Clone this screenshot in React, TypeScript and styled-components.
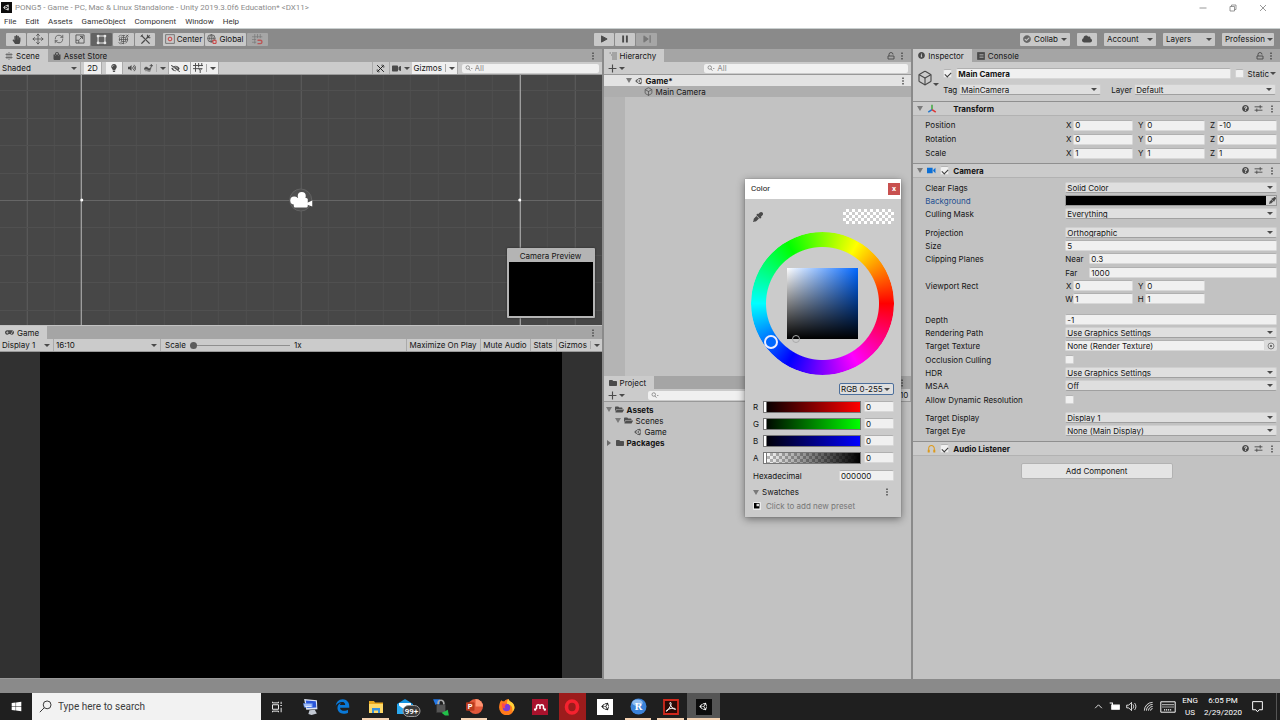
import React from "react";
import styled, { createGlobalStyle, css } from "styled-components";
import {
  FaUnity, FaHandPaper, FaCloud, FaEdgeLegacy, FaLightbulb, FaWindows, FaVolumeUp, FaEyeDropper,
  FaShoppingBag, FaCheckCircle, FaInfoCircle, FaQuestionCircle, FaGamepad, FaFolder, FaFolderOpen,
  FaEyeSlash, FaVideo,
} from "react-icons/fa";
import { Box, Move, RefreshCw } from "lucide-react";

const ui = `Inter, "Liberation Sans", sans-serif`;
const sys = `Roboto, "Noto Sans", sans-serif`;

const Global = createGlobalStyle`
  * { box-sizing: border-box; }
  body { margin: 0; background: #8a8a8a; font-family: ${ui}; font-size: 8px; line-height: 10px; color: #141414; }
  button, input, select { font: inherit; color: inherit; margin: 0; padding: 0; border: 0; background: none; border-radius: 0; min-width: 0; }
  h1, h2, h3, p, ul { margin: 0; padding: 0; font: inherit; }
  svg { display: block; flex: none; }
`;

/* ---------- shared parts ---------- */
const Page = styled.div`
  min-height: 100vh;
  display: flex;
  flex-direction: column;
`;
const Spacer = styled.div`flex: 1;`;
const Caret = styled.span`
  flex: none;
  border: 3px solid transparent;
  border-top-color: #4a4a4a;
  border-bottom: 0;
  width: 6px;
`;
const Foldout = styled.span`
  flex: none;
  border: 3px solid transparent;
  border-top: 5px solid #7a7a7a;
  border-bottom: 0;
  width: 6px;
`;
const CaretRight = styled.span`
  flex: none;
  margin-right: 2px;
  border: 3px solid transparent;
  border-left: 4px solid #6a6a6a;
  border-right: 0;
`;
const NoCaret = styled.span`width: 6px;`;
const Svg = ({ s = 10, w, children, vb = "0 0 16 16" }: { s?: number; w?: number; vb?: string; children: React.ReactNode }) => (
  <svg width={w ?? s} height={s} viewBox={vb} fill="none" stroke="currentColor" strokeWidth="1.5" aria-hidden="true">{children}</svg>
);
const Dots = () => (
  <Svg s={8}><g fill="currentColor" stroke="none"><rect x="6.5" y="1" width="3" height="3" /><rect x="6.5" y="6.5" width="3" height="3" /><rect x="6.5" y="12" width="3" height="3" /></g></Svg>
);
const Lock = () => (
  <Svg s={8}><path d="M2 8h12v6H2zM4 8V5a4 4 0 0 1 8 0" strokeWidth="1.8" /></Svg>
);
const Magnifier = () => (
  <Svg s={8}><circle cx="5.5" cy="7" r="3.5" /><path d="M8 10l3 3.500M12 8l1.500 1.500L15 8" /></Svg>
);
const Sliders = () => (
  <Svg s={9}><path d="M1 5h14M11 2v6M1 11h14M5 8v6" strokeWidth="1.600" /></Svg>
);

/* ---------- window chrome ---------- */
const TitleBar = styled.header`
  height: 14px;
  display: flex;
  align-items: center;
  gap: 3px;
  padding: 1px 0 0 1px;
  background: #fff;
  color: #8c8c8c;
  font-family: ${sys};
`;
const LogoTile = styled.span<{ $light?: boolean; $size: number }>`
  width: ${(p) => p.$size}px;
  height: ${(p) => p.$size}px;
  display: grid;
  place-items: center;
  background: ${(p) => (p.$light ? "#fff" : "#0c0c0c")};
  color: ${(p) => (p.$light ? "#111" : "#fff")};
`;
const WindowButton = styled.button`
  width: 30px;
  height: 14px;
  display: grid;
  place-items: center;
  color: #777;
`;
const WindowButtons = styled.div`display: flex; padding-right: 2px;`;
const MenuBar = styled.nav`
  height: 14px;
  display: flex;
  align-items: center;
  gap: 9px;
  padding: 2px 0 0 4px;
  background: #fff;
  color: #333;
  font-family: ${sys};
`;

/* ---------- main toolbar ---------- */
const Toolbar = styled.div`
  height: 21px;
  border-top: 1px solid #c9cfcf;
  display: grid;
  grid-template-columns: 588fr 64px 616fr;
  align-items: center;
  padding: 0 6px;
  background: #8a8a8a;
`;
const Group = styled.div<{ $gap?: number; $end?: boolean }>`
  display: flex;
  align-items: stretch;
  gap: ${(p) => p.$gap ?? 1}px;
  justify-content: ${(p) => (p.$end ? "flex-end" : "flex-start")};
`;
const ToolButton = styled.button<{ $w: number; $active?: boolean; $off?: boolean }>`
  width: ${(p) => p.$w}px;
  height: 13px;
  display: flex;
  align-items: center;
  justify-content: center;
  gap: 2px;
  border-radius: 1px;
  background: ${(p) => (p.$active ? "#636363" : p.$off ? "#a6a6a6" : "#c8c8c8")};
  color: ${(p) => (p.$active ? "#e8e8e8" : p.$off ? "#777" : "#4a4a4a")};
`;
const ToolText = styled.span`color: #141414;`;
const DropButton = styled(ToolButton)`
  justify-content: space-between;
  padding: 0 3px;
  color: #141414;
`;

/* ---------- docked panels ---------- */
const Workspace = styled.main`
  flex: 1;
  display: grid;
  grid-template-columns: 602fr 308fr 367fr;
  gap: 2px;
  background: #8a8a8a;
`;
const Column = styled.div`
  min-width: 0;
  display: flex;
  flex-direction: column;
`;
const Panel = styled.section<{ $h?: number }>`
  display: flex;
  flex-direction: column;
  background: #c2c2c2;
  ${(p) => (p.$h ? css`height: ${p.$h}px;` : css`flex: 1;`)}
`;
const TabBar = styled.div`
  height: 13px;
  flex: none;
  display: flex;
  align-items: stretch;
  background: #a5a5a5;
  color: #4a4a4a;
`;
const Tab = styled.button<{ $on?: boolean }>`
  display: flex;
  align-items: center;
  gap: 3px;
  padding: 0 8px 0 5px;
  background: ${(p) => (p.$on ? "#cbcbcb" : "transparent")};
`;
const TabText = styled.span`color: #141414;`;
const TabTools = styled.div`
  display: flex;
  align-items: center;
  gap: 3px;
  padding-right: 5px;
`;
const Strip = styled.div`
  height: 13px;
  flex: none;
  display: flex;
  align-items: stretch;
  background: #cbcbcb;
  border-bottom: 1px solid #999;
  color: #4a4a4a;
`;
const StripButton = styled.button<{ $w?: number; $lit?: boolean }>`
  ${(p) => p.$w && css`width: ${p.$w}px;`}
  display: flex;
  align-items: center;
  justify-content: center;
  gap: 3px;
  padding: 0 2px;
  border-right: 1px solid #aaa;
  background: ${(p) => (p.$lit ? "#efefef" : "transparent")};
`;
const Bar = styled.span`width: 1px; height: 8px; background: #aaa;`;
const SelectBox = styled.span<{ $w?: number; $flat?: boolean }>`
  position: relative;
  display: flex;
  align-items: center;
  ${(p) => (p.$w ? css`width: ${p.$w}px;` : css`flex: 1;`)}
  ${(p) => p.$flat
    ? css`border-right: 1px solid #aaa;`
    : css`height: 11px; background: #dfdfdf; border: 1px solid #cfcfcf; border-bottom-color: #a0a0a0; border-radius: 2px;`}
  select { appearance: none; width: 100%; height: 100%; padding: 0 8px 0 ${(p) => (p.$flat ? 2 : 1)}px; color: #141414; outline: 0; }
  ${Caret} { position: absolute; right: 3px; pointer-events: none; }
`;
const Select = ({ value, w, flat, id, label }: { value: string; w?: number; flat?: boolean; id?: string; label?: string }) => (
  <SelectBox $w={w} $flat={flat}>
    <select id={id} aria-label={label} defaultValue={value}><option>{value}</option></select>
    <Caret />
  </SelectBox>
);
const SearchBox = styled.label<{ $w?: number }>`
  ${(p) => (p.$w ? css`width: ${p.$w}px;` : css`flex: 1;`)}
  height: 9px;
  align-self: center;
  margin-right: 3px;
  display: flex;
  align-items: center;
  gap: 2px;
  padding-left: 3px;
  border-radius: 2px;
  background: #f0f0f0;
  color: #777;
  input { flex: 1; width: 10px; height: 9px; outline: 0; }
  input::placeholder { color: #8a8a8a; opacity: 1; }
`;

/* ---------- scene and game ---------- */
const SceneView = styled.div`
  position: relative;
  height: 250px;
  background: #474747;
  overflow: hidden;
  > svg { width: 100%; height: 100%; }
`;
const Preview = styled.figure`
  position: absolute;
  right: 7px;
  bottom: 7px;
  width: 88px;
  height: 70px;
  margin: 0;
  padding: 0 2px 2px;
  display: flex;
  flex-direction: column;
  background: #b4b4b4;
  border-radius: 1px;
  box-shadow: 0 0 2px #222;
  figcaption { height: 14px; line-height: 16px; text-align: center; }
`;
const PreviewScreen = styled.div`flex: 1; background: #000;`;
const GameView = styled.div`
  flex: 1;
  display: flex;
  justify-content: center;
  background: #313131;
  border-bottom: 1px solid #999;
`;
const GameScreen = styled.div`aspect-ratio: 16 / 10; background: #000;`;
const ZoomControl = styled.label`
  display: flex;
  align-items: center;
  gap: 4px;
  padding-left: 4px;
  color: #141414;
  input { appearance: none; width: 100px; height: 8px; background: linear-gradient(#8f8f8f, #8f8f8f) center / 100% 1px no-repeat; }
  input::-webkit-slider-thumb { appearance: none; width: 7px; height: 7px; border-radius: 50%; background: #5c5c5c; }
`;
const StripText = styled(StripButton)`
  border-right: 0;
  border-left: 1px solid #aaa;
  color: #141414;
  padding: 0 2px;
`;

/* ---------- trees ---------- */
const Tree = styled.ul<{ $gutter?: boolean }>`
  flex: 1;
  list-style: none;
  background: ${(p) => (p.$gutter ? "linear-gradient(90deg, #b4b4b4 21px, transparent 21px)" : "none")};
  padding-top: ${(p) => (p.$gutter ? 0 : 2)}px;
`;
const TreeRow = styled.li<{ $indent: number; $tone?: string; $bold?: boolean }>`
  height: 11px;
  display: flex;
  align-items: center;
  gap: 3px;
  padding: 0 4px 0 ${(p) => p.$indent}px;
  background: ${(p) => p.$tone ?? "transparent"};
  font-weight: ${(p) => (p.$bold ? 700 : 400)};
  color: #141414;
  svg { color: #4f4f4f; }
`;
const AddButton = styled.button`
  display: flex;
  align-items: center;
  gap: 2px;
  padding: 0 4px;
  color: #4a4a4a;
`;

/* ---------- inspector ---------- */
const ObjectHeader = styled.div`
  display: flex;
  gap: 4px;
  height: 39px;
  padding: 6px 4px 0 4px;
  background: #cbcbcb;
  color: #4a4a4a;
`;
const ObjectIcon = styled.div`width: 22px; display: flex; align-items: flex-end; height: 18px;`;
const ObjectLines = styled.div`flex: 1; display: flex; flex-direction: column; gap: 5px;`;
const Line = styled.div<{ $gap: number }>`
  display: flex;
  align-items: center;
  gap: ${(p) => p.$gap}px;
  color: #141414;
`;
const FieldInput = styled.input<{ $bold?: boolean }>`
  flex: 1;
  width: 10px;
  height: 11px;
  padding: 0 1px;
  border: 1px solid #d8d8d8;
  border-top-color: #b0b0b0;
  border-radius: 2px;
  background: #f0f0f0;
  font-weight: ${(p) => (p.$bold ? 700 : 400)};
`;
const Check = styled.input.attrs({ type: "checkbox" })`
  appearance: none;
  flex: none;
  width: 9px;
  height: 9px;
  border: 1px solid #d4d4d4;
  border-top-color: #b4b4b4;
  border-radius: 2px;
  background: #f0f0f0;
  display: grid;
  place-items: center;
  &:checked::before {
    content: "";
    width: 5px;
    height: 3px;
    border: solid #3a3a3a;
    border-width: 0 0 1px 1px;
    transform: rotate(-45deg);
  }
`;
const TagLabel = styled.label<{ $w: number }>`width: ${(p) => p.$w}px; text-align: right;`;
const ComponentHeader = styled.h3`
  height: 15px;
  display: flex;
  align-items: center;
  gap: 4px;
  padding: 0 4px;
  border-top: 1px solid #8f8f8f;
  border-bottom: 1px solid #b2b2b2;
  background: #cbcbcb;
  color: #4a4a4a;
`;
const ComponentTitle = styled.label<{ $pad?: boolean }>`
  flex: 1;
  padding-left: ${(p) => (p.$pad ? 12 : 0)}px;
  font-weight: 700;
  color: #141414;
`;
const HeaderTools = styled.span`display: flex; align-items: center; gap: 5px;`;
const Fields = styled.div<{ $top?: number; $bottom?: number }>`
  display: flex;
  flex-direction: column;
  padding: ${(p) => p.$top ?? 3}px 3px ${(p) => p.$bottom ?? 3}px 12px;
`;
const Row = styled.div<{ $tall?: boolean }>`
  height: ${(p) => (p.$tall ? 14 : 13)}px;
  display: grid;
  grid-template-columns: 140px minmax(0, 1fr);
  align-items: center;
  ${(p) => !p.$tall && css`&:nth-child(3n) { margin-bottom: 1px; }`}
`;
const RowLabel = styled.label<{ $hot?: boolean }>`color: ${(p) => (p.$hot ? "#1d4f91" : "#141414")};`;
const Cell = styled.div`display: flex; align-items: center;`;
const Axes = styled.div`
  display: grid;
  grid-template-columns: repeat(3, minmax(0, 1fr));
  gap: 4px;
`;
const Axis = styled.label`
  display: flex;
  align-items: center;
  gap: 1px;
  span { width: 7px; text-align: center; }
`;
const SubLabel = styled.label`width: 24px;`;
const ColorField = styled.button`
  flex: 1;
  height: 11px;
  display: flex;
  border: 1px solid #999;
  background: #d2d2d2;
  color: #4a4a4a;
  align-items: center;
  span { flex: 1; height: 9px; margin-right: 3px; background: #000; }
`;
const ObjectField = styled.div`
  flex: 1;
  display: flex;
  align-items: center;
  background: #dcdcdc;
  color: #4a4a4a;
  border-radius: 2px;
  padding-right: 2px;
  gap: 2px;
  ${FieldInput} { color: #141414; }
`;
const AddComponent = styled.button`
  width: 152px;
  height: 16px;
  margin: 7px auto 0;
  border: 1px solid #b2b2b2;
  border-radius: 2px;
  background: #e4e4e4;
`;

/* ---------- colour window ---------- */
const ColorWindow = styled.section`
  position: absolute;
  left: 745px;
  top: 179px;
  width: 156px;
  background: #cbcbcb;
  box-shadow: 0 2px 8px rgba(0, 0, 0, 0.45), 0 0 1px #888;
`;
const ColorTitle = styled.h2`
  height: 20px;
  display: flex;
  align-items: center;
  justify-content: space-between;
  padding: 0 1px 0 6px;
  background: #fff;
  font-family: ${sys};
`;
const CloseButton = styled.button`
  width: 12px;
  height: 12px;
  background: #c8504f;
  color: #fff;
  font-weight: 700;
  line-height: 8px;
`;
const ColorBody = styled.div`padding: 10px 7px 4px 6px;`;
const PickerTop = styled.div`
  display: flex;
  justify-content: space-between;
  align-items: center;
  padding-left: 2px;
  color: #4a4a4a;
`;
const Swatch = styled.span`
  width: 51px;
  height: 15px;
  background: conic-gradient(#fff 25%, #ccc 0 50%, #fff 0 75%, #ccc 0) 0 0 / 6px 6px;
`;
const Wheel = styled.div`
  position: relative;
  width: 143px;
  height: 143px;
  margin: 8px 0;
  display: grid;
  place-items: center;
`;
const HueRing = styled.div`
  grid-area: 1 / 1;
  width: 143px;
  height: 143px;
  border-radius: 50%;
  background: conic-gradient(from 90deg, #f00, #f0f, #00f, #0ff, #0f0, #ff0, #f00);
  mask: radial-gradient(circle, transparent 56px, #000 57px);
`;
const Shade = styled.div`
  grid-area: 1 / 1;
  width: 71px;
  height: 71px;
  background: linear-gradient(to top, #000, transparent), linear-gradient(to right, #fff, #0066ff);
`;
const Handle = styled.span<{ $x: number; $y: number; $r: number }>`
  position: absolute;
  left: ${(p) => p.$x - p.$r}px;
  top: ${(p) => p.$y - p.$r}px;
  width: ${(p) => p.$r * 2}px;
  height: ${(p) => p.$r * 2}px;
  border: ${(p) => (p.$r > 5 ? "2px solid #eef" : "1px solid #aaa")};
  border-radius: 50%;
  background: ${(p) => (p.$r > 5 ? "#0068ff" : "transparent")};
`;
const ModeLine = styled.div`
  display: flex;
  justify-content: flex-end;
  padding-bottom: 3px;
  ${SelectBox} { border: 1px solid #4c6f9c; height: 12px; }
`;
const Channel = styled.div`
  height: 17px;
  display: grid;
  grid-template-columns: 7px 98px 30px;
  column-gap: 3px;
  align-items: center;
  padding-left: 2px;
  ${FieldInput} { width: 30px; }
`;
const Range = styled.input.attrs({ type: "range" })<{ $fill: string }>`
  appearance: none;
  width: 98px;
  height: 12px;
  border: 1px solid #777;
  background: ${(p) => p.$fill};
  &::-webkit-slider-thumb { appearance: none; width: 3px; height: 10px; background: #fff; border-right: 1px solid #777; }
`;
const HexLine = styled.div`
  height: 19px;
  display: flex;
  align-items: center;
  justify-content: space-between;
  padding-left: 2px;
  ${FieldInput} { flex: none; width: 55px; }
`;
const SwatchLine = styled.div`
  height: 14px;
  display: flex;
  align-items: center;
  gap: 3px;
  padding: 0 3px 0 2px;
  color: #4a4a4a;
`;
const PresetButton = styled.button`
  display: flex;
  align-items: center;
  gap: 5px;
  padding-left: 2px;
  height: 14px;
  color: #777;
`;

/* ---------- desktop taskbar ---------- */
const StatusBar = styled.div`height: 14px; background: #8a8a8a;`;
const Taskbar = styled.footer`
  height: 27px;
  display: flex;
  align-items: stretch;
  background: #1f1f1f;
  color: #fff;
  font-family: ${sys};
`;
const StartButton = styled.button`width: 32px; display: grid; place-items: center;`;
const TaskSearch = styled.label`
  width: 229px;
  display: flex;
  align-items: center;
  gap: 6px;
  padding-left: 7px;
  background: #f2f2f2;
  color: #333;
  input { flex: 1; font-size: 10px; line-height: 14px; }
  input::placeholder { color: #3c3c3c; opacity: 1; }
`;
const Apps = styled.div`
  width: 459px;
  display: grid;
  grid-template-columns: repeat(14, minmax(0, 1fr));
`;
const AppButton = styled.button<{ $open?: boolean; $tone?: string }>`
  display: grid;
  place-items: center;
  margin: 0 ${(p) => (p.$tone === "#555" ? 0 : 3)}px;
  background: ${(p) => p.$tone ?? "transparent"};
  border-bottom: 2px solid ${(p) => (p.$open ? "#f5d3b3" : "transparent")};
  border-top: 2px solid transparent;
`;
const Tray = styled.div`
  display: flex;
  align-items: center;
  gap: 6px;
  padding-right: 3px;
`;
const TrayText = styled.div`
  line-height: 12px;
  text-align: center;
  white-space: nowrap;
`;
const NoticeButton = styled.button`
  width: 29px;
  height: 100%;
  display: grid;
  place-items: center;
  padding-right: 9px;
  border-right: 1px solid #555;
`;

const SceneDrawing = () => {
  const cols = Array.from({ length: 23 }, (_, i) => i - 11);
  const rows = [-4, -3, -2, -1, 0, 1, 2, 3, 4];
  return (
    <svg viewBox="0 0 602 250" preserveAspectRatio="xMidYMid slice" aria-hidden="true">
      {cols.map((i) => <rect key={i} x={Math.round(300.5 + i * 27.4)} y="0" width="1" height="250" fill={i % 10 === 0 ? "#5e5e5e" : "#505050"} />)}
      {rows.map((i) => <rect key={i} x="0" y={Math.round(125 + i * 27.4)} width="602" height="1" fill={i === 0 ? "#666" : "#505050"} />)}
      <path d="M81.500 0v250M520.500 0v250" stroke="#b8b8b8" />
      <circle cx="82" cy="125" r="1.500" fill="#fff" /><circle cx="520" cy="125" r="1.500" fill="#fff" />
      <circle cx="301" cy="125" r="11" fill="#505050" stroke="#626262" />
      <g fill="#fff"><circle cx="302" cy="121" r="4" /><circle cx="294.500" cy="125.500" r="4" /><rect x="294" y="123" width="14" height="9.500" rx="1.500" /><path d="M307 128l5.500-2.500v6l-5.500-2z" /></g>
    </svg>
  );
};

const Vec = ({ name, v }: { name: string; v: string[] }) => (
  <Row $tall role="group" aria-label={name}>
    <RowLabel as="span">{name}</RowLabel>
    <Axes>{["X", "Y", "Z"].map((a, i) => <Axis key={a}><span>{a}</span><FieldInput defaultValue={v[i]} /></Axis>)}</Axes>
  </Row>
);
const Prop = ({ name, children, id, hot }: { name: string; id: string; hot?: boolean; children: React.ReactNode }) => (
  <Row><RowLabel htmlFor={id} $hot={hot}>{name}</RowLabel><Cell>{children}</Cell></Row>
);
const Drop = ({ name, value }: { name: string; value: string }) => (
  <Prop name={name} id={name.replace(/ /g, "-")}><Select id={name.replace(/ /g, "-")} value={value} /></Prop>
);
const HeaderIcons = () => (
  <HeaderTools><FaQuestionCircle size={7} /><Sliders /><Dots /></HeaderTools>
);

const checker = "conic-gradient(#fff 25%, #bbb 0 50%, #fff 0 75%, #bbb 0) 0 0 / 6px 6px";
const channels = [
  ["R", "linear-gradient(90deg, #000, #f00)"],
  ["G", "linear-gradient(90deg, #000, #0f0)"],
  ["B", "linear-gradient(90deg, #000, #00f)"],
  ["A", `linear-gradient(90deg, transparent, #000), ${checker}`],
];

export default function App() {
  return (
    <Page>
      <Global />
      <TitleBar>
        <LogoTile $size={11}><FaUnity size={7} /></LogoTile>
        <h1>PONG5 - Game - PC, Mac &amp; Linux Standalone - Unity 2019.3.0f6 Education* &lt;DX11&gt;</h1>
        <Spacer />
        <WindowButtons>
          <WindowButton aria-label="Minimize"><Svg s={8}><path d="M1 8h14" /></Svg></WindowButton>
          <WindowButton aria-label="Restore"><Svg s={8}><path d="M2 5h9v9H2zM5 5V2h9v9h-3" /></Svg></WindowButton>
          <WindowButton aria-label="Close"><Svg s={8}><path d="M2 2l12 12M14 2L2 14" /></Svg></WindowButton>
        </WindowButtons>
      </TitleBar>
      <MenuBar>
        {["File", "Edit", "Assets", "GameObject", "Component", "Window", "Help"].map((m) => <button key={m}>{m}</button>)}
      </MenuBar>

      <Toolbar>
        <Group $gap={8}>
          <Group>
            <ToolButton $w={20} aria-label="Hand"><FaHandPaper size={9} /></ToolButton>
            <ToolButton $w={21} aria-label="Move"><Move size={12} strokeWidth={1.5} /></ToolButton>
            <ToolButton $w={20} aria-label="Rotate"><RefreshCw size={10} strokeWidth={1.7} /></ToolButton>
            <ToolButton $w={20} aria-label="Scale"><Svg><path d="M1.500 1.500h13v13h-13zM1.500 10h4.500v4.500M7 9l5-5M8 4h4v4" strokeWidth="1.300" /></Svg></ToolButton>
            <ToolButton $w={21} $active aria-label="Rect"><Svg s={11}><path d="M3 3h10v10H3z" /><g fill="currentColor" stroke="none"><circle cx="3" cy="3" r="2" /><circle cx="13" cy="3" r="2" /><circle cx="3" cy="13" r="2" /><circle cx="13" cy="13" r="2" /></g></Svg></ToolButton>
            <ToolButton $w={21} aria-label="Transform"><Svg s={11}><circle cx="8" cy="8" r="6" strokeWidth="1.200" strokeDasharray="6 2" /><path d="M5 5h6v6H5zM8 2v12M2 8h12" strokeWidth="1" /><path d="M12 1l3 3M1 12l3 3M12 4l3-3M1 4l3-3" strokeWidth="1.200" /></Svg></ToolButton>
            <ToolButton $w={20} aria-label="Custom tools"><Svg s={11}><path d="M2 2l12 12M14 2L9 7M7 9l-5 5" strokeWidth="2" /><path d="M11 1a3 3 0 0 0 4 4M1 4l3-3" strokeWidth="1.500" /></Svg></ToolButton>
          </Group>
          <Group>
            <ToolButton $w={41}><Svg><path d="M1 1h14v14H1z" strokeWidth="1" /><circle cx="8" cy="8" r="3" stroke="#c33" /></Svg><ToolText>Center</ToolText></ToolButton>
            <ToolButton $w={41}><Svg><circle cx="7" cy="7" r="6" strokeWidth="1.200" /><path d="M1 7h12M7 1v12M7 1c-4 4-4 8 0 12M7 1c4 4 4 8 0 12" strokeWidth="1" /><path d="M9.500 10h5v5h-5z" stroke="#c33" fill="#c8c8c8" /></Svg><ToolText>Global</ToolText></ToolButton>
            <ToolButton $w={21} $off aria-label="Snap"><Svg s={11}><path d="M4 0v14M8 0v6M12 0v6M0 4h15M0 8h6M0 12h6" strokeWidth="1" /><path d="M8 9h4a2.500 2.500 0 0 1 0 5H8" stroke="#b55" strokeWidth="2" /></Svg></ToolButton>
          </Group>
        </Group>
        <Group>
          <ToolButton $w={20} aria-label="Play"><Svg><path d="M4 3l9 5-9 5z" fill="currentColor" /></Svg></ToolButton>
          <ToolButton $w={20} aria-label="Pause"><Svg><path d="M5 2.500v11M11 2.500v11" strokeWidth="3" /></Svg></ToolButton>
          <ToolButton $w={21} $off aria-label="Step"><Svg><path d="M3 3l7 5-7 5z" fill="currentColor" /><path d="M13 2v12" strokeWidth="2" /></Svg></ToolButton>
        </Group>
        <Group $gap={7} $end>
          <DropButton $w={50}><FaCheckCircle size={8} color="#666" />Collab<Caret /></DropButton>
          <ToolButton $w={20} aria-label="Services"><FaCloud size={10} /></ToolButton>
          <DropButton $w={52}>Account<Caret /></DropButton>
          <DropButton $w={52}>Layers<Caret /></DropButton>
          <DropButton $w={52}>Profession<Caret /></DropButton>
        </Group>
      </Toolbar>

      <Workspace>
        <Column>
          <Panel $h={277}>
            <TabBar>
              <Tab $on><Svg s={8}><path d="M4 2v12M8 0v16M12 2v12M1 5h14M1 11h14" strokeWidth="1.200" /></Svg><TabText>Scene</TabText></Tab>
              <Tab><FaShoppingBag size={8} /><TabText>Asset Store</TabText></Tab>
              <Spacer /><TabTools><Dots /></TabTools>
            </TabBar>
            <Strip>
              <Select flat w={81} value="Shaded" label="Draw mode" />
              <Group $gap={3}>
                <span />
                <Group $gap={4}>
                  <StripButton $w={18} $lit><ToolText>2D</ToolText></StripButton>
                  <Group $gap={0}>
                    <StripButton $w={17} $lit aria-label="Lighting"><FaLightbulb size={8} /></StripButton>
                    <StripButton $w={18} aria-label="Audio"><FaVolumeUp size={8} /></StripButton>
                    <StripButton $w={28} aria-label="Effects"><Svg s={9}><path d="M1 7c2-2 4-2 6 0s4 1 5-1v3c-1 2-3 2-5 1s-4-1-6 0zM2 12c3-1 7 2 10 0" fill="currentColor" strokeWidth="1" /><path d="M13 0v6M10 3h6" strokeWidth="1.600" /></Svg><Bar /><Caret /></StripButton>
                    <StripButton $w={22} $lit aria-label="Hidden objects: 0"><FaEyeSlash size={9} /><ToolText>0</ToolText></StripButton>
                    <StripButton $w={28} $lit aria-label="Grid"><Svg s={10}><path d="M4 0v14M9 0v7M14 0v5M0 4h16M0 9h8M8 9h7M9 9l2.500 3v4M14 9l-2.500 3" /></Svg><Bar /><Caret /></StripButton>
                  </Group>
                </Group>
              </Group>
              <Spacer />
              <StripText $w={17} aria-label="Component tools"><Svg s={9}><path d="M2 2l12 12M14 2L2 14" strokeWidth="1.600" /><path d="M11 1a3 3 0 0 0 4 4M1 11a3 3 0 0 1 4 4" /></Svg></StripText>
              <StripText $w={23} aria-label="Camera settings"><FaVideo size={9} color="#4a4a4a" /><Caret /></StripText>
              <StripButton $w={46} $lit><ToolText>Gizmos</ToolText><Bar /><Caret /></StripButton>
              <Group $gap={4}><span /><SearchBox $w={137}><Magnifier /><input placeholder="All" aria-label="Search scene" /></SearchBox></Group>
            </Strip>
            <SceneView>
              <SceneDrawing />
              <Preview><figcaption>Camera Preview</figcaption><PreviewScreen /></Preview>
            </SceneView>
          </Panel>
          <Panel>
            <TabBar>
              <Tab $on><FaGamepad size={9} /><TabText>Game</TabText></Tab>
              <Spacer /><TabTools><Dots /></TabTools>
            </TabBar>
            <Strip>
              <Select flat w={54} value="Display 1" label="Display" />
              <Select flat w={107} value="16:10" label="Aspect ratio" />
              <ZoomControl>Scale<input type="range" min={1} max={5} defaultValue={1} />1x</ZoomControl>
              <Spacer />
              <StripText $w={74}>Maximize On Play</StripText>
              <StripText $w={50}>Mute Audio</StripText>
              <StripText $w={26}>Stats</StripText>
              <StripText $w={46}>Gizmos<Bar /><Caret /></StripText>
            </Strip>
            <GameView><GameScreen /></GameView>
          </Panel>
        </Column>

        <Column>
          <Panel $h={327}>
            <TabBar>
              <Tab $on><Svg s={8}><path d="M1 2h3M6 2h10M4 6h12M6 10h10M6 14h10" strokeWidth="1.200" /></Svg><TabText>Hierarchy</TabText></Tab>
              <Spacer /><TabTools><Lock /><Dots /></TabTools>
            </TabBar>
            <Strip>
              <AddButton aria-label="Create"><Svg s={9}><path d="M8 1v14M1 8h14" strokeWidth="2" /></Svg><Caret /></AddButton>
              <Spacer />
              <SearchBox $w={204}><Magnifier /><input placeholder="All" aria-label="Search hierarchy" /></SearchBox>
            </Strip>
            <Tree $gutter>
              <TreeRow $indent={22} $tone="#e3e3e3" $bold><Foldout /><FaUnity size={8} />Game*<Spacer /><Dots /></TreeRow>
              <TreeRow $indent={40} $tone="#aeaeae"><Box size={9} strokeWidth={2} />Main Camera</TreeRow>
            </Tree>
          </Panel>
          <Panel>
            <TabBar>
              <Tab $on><FaFolder size={8} /><TabText>Project</TabText></Tab>
              <Spacer /><TabTools><Lock /><Dots /></TabTools>
            </TabBar>
            <Strip>
              <AddButton aria-label="Create"><Svg s={9}><path d="M8 1v14M1 8h14" strokeWidth="2" /></Svg><Caret /></AddButton>
              <Spacer />
              <SearchBox $w={222}><Magnifier /><input aria-label="Search project" /></SearchBox>
              <StripButton $w={38}><Spacer /><ToolText>10</ToolText></StripButton>
            </Strip>
            <Tree>
              <TreeRow $indent={2} $bold><Foldout /><FaFolderOpen size={9} />Assets</TreeRow>
              <TreeRow $indent={11}><Foldout /><FaFolderOpen size={9} />Scenes</TreeRow>
              <TreeRow $indent={30}><FaUnity size={8} />Game</TreeRow>
              <TreeRow $indent={3} $bold><CaretRight /><FaFolder size={8} />Packages</TreeRow>
            </Tree>
          </Panel>
        </Column>

        <Column>
          <Panel>
            <TabBar>
              <Tab $on><FaInfoCircle size={7} /><TabText>Inspector</TabText></Tab>
              <Tab><Svg s={8}><path d="M1 1h14v14H1z" fill="currentColor" /><path d="M5 5h8M5 8h8M5 11h8" stroke="#a5a5a5" /></Svg><TabText>Console</TabText></Tab>
              <Spacer /><TabTools><Lock /><Dots /></TabTools>
            </TabBar>
            <ObjectHeader>
              <ObjectIcon><Box size={16} strokeWidth={1.7} /><Caret /></ObjectIcon>
              <ObjectLines>
                <Line $gap={4}>
                  <Check defaultChecked aria-label="Active" />
                  <FieldInput $bold defaultValue="Main Camera" aria-label="Name" />
                  <Check id="static" />
                  <Line $gap={1}><RowLabel htmlFor="static">Static</RowLabel><Caret /></Line>
                </Line>
                <Line $gap={2}>
                  <TagLabel $w={14} htmlFor="tag">Tag</TagLabel><Select id="tag" value="MainCamera" />
                  <TagLabel $w={29} htmlFor="layer">Layer</TagLabel><Select id="layer" value="Default" />
                </Line>
              </ObjectLines>
            </ObjectHeader>
            <ComponentHeader>
              <Foldout />
              <Svg s={10}><path d="M8 9V1" stroke="#4a4" strokeWidth="2.500" /><path d="M8 9l-6 4" stroke="#27c" strokeWidth="2.500" /><path d="M8 9l6 4" stroke="#d33" strokeWidth="2.500" /></Svg>
              <ComponentTitle as="span" $pad>Transform</ComponentTitle>
              <HeaderIcons />
            </ComponentHeader>
            <Fields $top={2}>
              <Vec name="Position" v={["0", "0", "-10"]} />
              <Vec name="Rotation" v={["0", "0", "0"]} />
              <Vec name="Scale" v={["1", "1", "1"]} />
            </Fields>
            <ComponentHeader>
              <Foldout />
              <Svg s={9}><path d="M0 3h10v10H0zM11 7l4-4v10l-4-4z" fill="#0b6fd6" stroke="none" /></Svg>
              <Check id="camera-on" defaultChecked />
              <ComponentTitle htmlFor="camera-on">Camera</ComponentTitle>
              <HeaderIcons />
            </ComponentHeader>
            <Fields>
              <Drop name="Clear Flags" value="Solid Color" />
              <Prop name="Background" id="background" hot><ColorField id="background"><span /><FaEyeDropper size={7} /></ColorField></Prop>
              <Drop name="Culling Mask" value="Everything" />
            </Fields>
            <Fields $top={2}>
              <Drop name="Projection" value="Orthographic" />
              <Prop name="Size" id="size"><FieldInput id="size" defaultValue="5" /></Prop>
              <Row><RowLabel as="span">Clipping Planes</RowLabel><Cell><SubLabel htmlFor="near">Near</SubLabel><FieldInput id="near" defaultValue="0.3" /></Cell></Row>
              <Row><span /><Cell><SubLabel htmlFor="far">Far</SubLabel><FieldInput id="far" defaultValue="1000" /></Cell></Row>
              <Row><RowLabel as="span">Viewport Rect</RowLabel><Axes><Axis><span>X</span><FieldInput defaultValue="0" /></Axis><Axis><span>Y</span><FieldInput defaultValue="0" /></Axis></Axes></Row>
              <Row><span /><Axes><Axis><span>W</span><FieldInput defaultValue="1" /></Axis><Axis><span>H</span><FieldInput defaultValue="1" /></Axis></Axes></Row>
            </Fields>
            <Fields $top={4}>
              <Prop name="Depth" id="depth"><FieldInput id="depth" defaultValue="-1" /></Prop>
              <Drop name="Rendering Path" value="Use Graphics Settings" />
              <Prop name="Target Texture" id="texture">
                <ObjectField><FieldInput id="texture" defaultValue="None (Render Texture)" /><Svg s={8}><circle cx="8" cy="8" r="6" strokeWidth="1.200" /><circle cx="8" cy="8" r="2" fill="currentColor" stroke="none" /></Svg></ObjectField>
              </Prop>
              <Prop name="Occlusion Culling" id="occlusion"><Check id="occlusion" /></Prop>
              <Drop name="HDR" value="Use Graphics Settings" />
              <Drop name="MSAA" value="Off" />
              <Prop name="Allow Dynamic Resolution" id="dynamic"><Check id="dynamic" /></Prop>
            </Fields>
            <Fields $top={2} $bottom={4}>
              <Drop name="Target Display" value="Display 1" />
              <Drop name="Target Eye" value="None (Main Display)" />
            </Fields>
            <ComponentHeader>
              <NoCaret />
              <Svg s={9}><path d="M3 14V8a5 5.500 0 0 1 10 0v6" stroke="#dd9a1c" strokeWidth="1.800" /><path d="M3 10v5M13 10v5" stroke="#dd9a1c" strokeWidth="3.500" /></Svg>
              <Check id="audio-on" defaultChecked />
              <ComponentTitle htmlFor="audio-on">Audio Listener</ComponentTitle>
              <HeaderIcons />
            </ComponentHeader>
            <AddComponent>Add Component</AddComponent>
          </Panel>
        </Column>
      </Workspace>

      <StatusBar />

      <Taskbar>
        <StartButton aria-label="Start"><FaWindows size={11} /></StartButton>
        <TaskSearch>
          <Svg s={13}><circle cx="10" cy="6" r="4.800" strokeWidth="1.200" /><path d="M6.500 9.500L1 15" strokeWidth="1.200" /></Svg>
          <input placeholder="Type here to search" aria-label="Search" />
        </TaskSearch>
        <Apps>
          <AppButton aria-label="Task view"><Svg s={12}><path d="M2 5h8v6H2zM2 1v1.500h8V1M2 15v-1.500h8V15M13.500 1v3M13.500 9v6M12.500 6h2" strokeWidth="1.200" /></Svg></AppButton>
          <AppButton aria-label="Remote desktop"><Svg s={17}><path d="M2 1l12 1 .5 8.500-10.500.5z" fill="#dfe6f5" stroke="none" /><path d="M3.500 2.300l9.500.7.5 6-8.600.5z" fill="#2a56d8" stroke="none" /><path d="M1 5h9v4H2z" fill="#6a95ee" stroke="none" /><path d="M2 6.500h7M3 8h6" stroke="#dbe7ff" strokeWidth="1" /><path d="M7 11.500l5-.5 2 3.500-5 1.500-3-1z" fill="#c2c8d2" stroke="none" /></Svg></AppButton>
          <AppButton aria-label="Edge"><FaEdgeLegacy size={15} color="#0a79d8" /></AppButton>
          <AppButton $open aria-label="File Explorer"><Svg s={16}><path d="M1 2h5l1 1.500h8V13H1z" fill="#e9a820" stroke="none" /><path d="M1 5h14v9H1z" fill="#ffd968" stroke="none" /><path d="M4 9h8v5h-2v-2.500H6V14H4z" fill="#3a92dd" stroke="none" /></Svg></AppButton>
          <AppButton aria-label="Mail, 99+ unread"><Svg s={20} w={25} vb="0 0 25 20"><path d="M1 7l8-5 8 5v10H1z" fill="#1593e0" stroke="none" /><path d="M3 6h12v4l-6 4-6-4z" fill="#fff" stroke="none" /><path d="M1 7l8 6 8-6v10H1z" fill="#2ba9ef" stroke="none" /><rect x="7" y="8.500" width="17" height="11" rx="5.500" fill="#3a3a3a" stroke="#999" strokeWidth="1" /><text x="15.500" y="17" textAnchor="middle" fontSize="8" fontWeight="600" fill="#fff" stroke="none">99+</text></Svg></AppButton>
          <AppButton aria-label="Secure connection"><Svg s={18}><path d="M1 1h6v5H3z" fill="#2277e6" stroke="none" /><path d="M5.500 7V4.500a2.500 2.500 0 0 1 5 0V7" stroke="#aaa" /><rect x="4" y="6" width="8" height="7" fill="#555" stroke="#333" strokeWidth=".5" /><path d="M8.500 13l3 2.500h3.500l-1-5-2 1z" fill="#22c04a" stroke="none" /></Svg></AppButton>
          <AppButton $open aria-label="PowerPoint"><Svg s={17}><circle cx="9" cy="8" r="7" fill="#e2583a" stroke="none" /><path d="M9 1a7 7 0 0 1 7 7H9z" fill="#ff9472" stroke="none" /><rect x="0" y="4" width="8" height="8" rx="1" fill="#b83a1d" stroke="none" /><text x="4" y="10.500" textAnchor="middle" fontSize="7" fontWeight="700" fill="#fff" stroke="none">P</text></Svg></AppButton>
          <AppButton aria-label="Firefox"><Svg s={17}><path d="M3 2c1 1 2 1 3 1 1-1 2-2 4-2 0 1 1 2 2 2.500 2 1 3.500 3 3.500 5.500a7 7 0 0 1-14.500 0c0-2 .5-5 2-7z" fill="#ff7a1a" stroke="none" /><path d="M10 1c0 1 1 2 2 2.500 2 1 3.500 3 3.500 5.500 0 2-1 3-2 4 .5-5-1-7-5-7 0-2 0-4 1.500-5z" fill="#ffd23a" stroke="none" /><circle cx="8" cy="9" r="3.500" fill="#7d3bd8" stroke="none" /><path d="M4 5c2 0 3 .5 4 1.500-2 0-2 2-1 3-3 1-4-2-3-4.500z" fill="#ff4a4a" stroke="none" /></Svg></AppButton>
          <AppButton aria-label="Mendeley"><Svg s={16}><rect width="16" height="16" fill="#a9122d" stroke="none" /><path d="M4.500 10V7.500a1.700 1.700 0 0 1 3.500 0V10M11.500 10V7.500a1.700 1.700 0 0 0-3.500 0" stroke="#fff" strokeWidth="1.500" /><circle cx="3.200" cy="10.500" r="1.200" fill="#fff" stroke="none" /><circle cx="12.800" cy="10.500" r="1.200" fill="#fff" stroke="none" /></Svg></AppButton>
          <AppButton $tone="#9c1c1c" aria-label="Opera"><Svg s={16}><ellipse cx="8" cy="8" rx="5.500" ry="6" stroke="#f5222f" strokeWidth="3.600" /></Svg></AppButton>
          <AppButton aria-label="Unity Hub"><LogoTile $size={16} $light><FaUnity size={9} /></LogoTile></AppButton>
          <AppButton $open aria-label="RStudio"><Svg s={17}><circle cx="8" cy="8" r="7.500" fill="#3b82d8" stroke="none" /><ellipse cx="7" cy="4.500" rx="5" ry="3" fill="#8fbdf0" stroke="none" /><text x="8" y="11.500" textAnchor="middle" fontSize="10" fontFamily="Liberation Serif, serif" fontWeight="700" fill="#fff" stroke="none">R</text></Svg></AppButton>
          <AppButton $open aria-label="Acrobat Reader"><Svg s={16}><path d="M1 1h14v14H1z" fill="#2a0a06" stroke="#d0291c" strokeWidth="1.800" /><path d="M7.500 3.500c1.500 0 .5 4-3.500 8.500-1.500 1-1-1 2-2s6-1 6.500 0-3 0-4.500-3-1.500-3.500-.5-3.500z" stroke="#fff" strokeWidth="1" /></Svg></AppButton>
          <AppButton $open $tone="#555" aria-label="Unity"><LogoTile $size={16}><FaUnity size={9} /></LogoTile></AppButton>
        </Apps>
        <Spacer />
        <Tray>
          <Svg s={9}><path d="M2 11l6-6 6 6" /></Svg>
          <Svg s={11}><path d="M4 6h11v6H4z" fill="currentColor" /><path d="M1 3h4v4" /></Svg>
          <Svg s={11}><path d="M1 6h3l4-4v12l-4-4H1zM10 5c1.500 2 1.500 4 0 6M12.500 3c2.500 3 2.500 7 0 10" strokeWidth="1.200" /></Svg>
          <Svg s={11}><path d="M2 14A12 12 0 0 1 14 2M5 14a9 9 0 0 1 9-9M8 14a6 6 0 0 1 6-6M11 14a3 3 0 0 1 3-3" strokeWidth="1.200" /></Svg>
          <Svg s={12} w={16} vb="0 0 20 15"><path d="M1 1h18v13H1z" strokeWidth="1.200" /><path d="M3 4.500h14M3 7.500h14M5 11h10" strokeDasharray="1.500 1" /></Svg>
          <TrayText>ENG<br />US</TrayText>
          <TrayText>6:05 PM<br />2/29/2020</TrayText>
          <NoticeButton aria-label="Notifications"><Svg s={13}><path d="M2 2h12v10H10l-2 2.500L6 12H2z" strokeWidth="1.200" /></Svg></NoticeButton>
        </Tray>
      </Taskbar>

      <ColorWindow aria-label="Color">
        <ColorTitle>Color<CloseButton aria-label="Close">x</CloseButton></ColorTitle>
        <ColorBody>
          <PickerTop><FaEyeDropper size={10} /><Swatch /></PickerTop>
          <Wheel>
            <HueRing /><Shade />
            <Handle $x={20} $y={110} $r={7} /><Handle $x={45} $y={107} $r={4} />
          </Wheel>
          <ModeLine><Select w={55} value="RGB 0-255" label="Color mode" /></ModeLine>
          {channels.map(([c, fill]) => (
            <Channel key={c}>
              <label htmlFor={`ch-${c}`}>{c}</label>
              <Range id={`ch-${c}`} $fill={fill} max={255} defaultValue={0} />
              <FieldInput defaultValue="0" aria-label={`${c} value`} />
            </Channel>
          ))}
          <HexLine><label htmlFor="hex">Hexadecimal</label><FieldInput id="hex" defaultValue="000000" /></HexLine>
          <SwatchLine><Foldout /><ToolText>Swatches</ToolText><Spacer /><Dots /></SwatchLine>
          <PresetButton><Svg s={8}><path d="M1 1h14v14H1z" fill="#fff" stroke="#eee" /><path d="M2 2h11v11H2z" fill="#000" stroke="none" /><path d="M7 3.500h5v5H7z" fill="#ddd" stroke="none" /></Svg>Click to add new preset</PresetButton>
        </ColorBody>
      </ColorWindow>
    </Page>
  );
}
